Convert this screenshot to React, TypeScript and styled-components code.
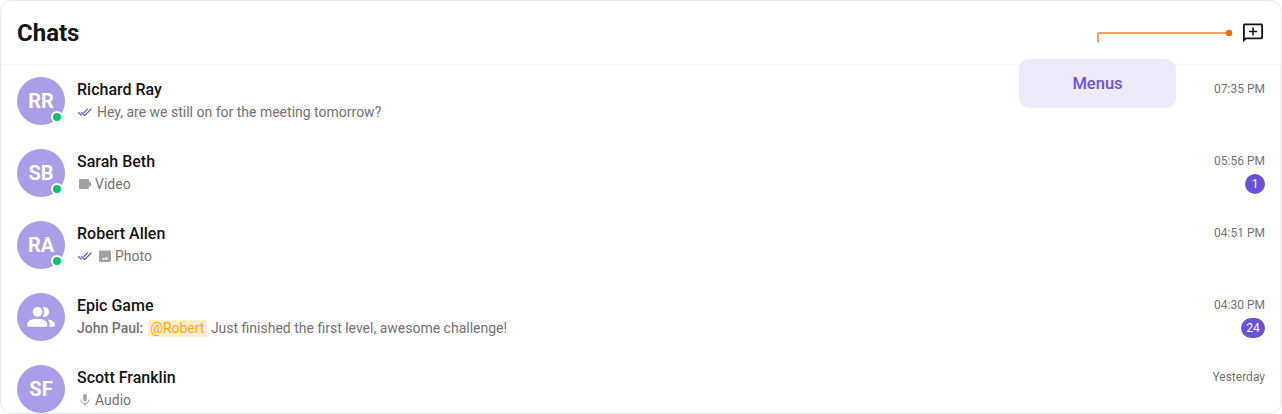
import React from "react";
import styled, { createGlobalStyle } from "styled-components";

const GlobalStyle = createGlobalStyle`
  *, *::before, *::after { box-sizing: border-box; }
  body {
    margin: 0;
    background: #fff;
    font-family: Roboto, "Liberation Sans", sans-serif;
    color: #141414;
  }
  svg { display: block; flex: none; }
`;

const Card = styled.main`
  position: relative;
  width: 1282px;
  height: 414px;
  border: 1px solid #e8e8e8;
  border-radius: 12px;
  overflow: hidden;
  background: #fff;
`;

const Header = styled.header`
  display: flex;
  align-items: center;
  justify-content: space-between;
  height: 64px;
  padding: 0 16px;
  border-bottom: 1px solid #f5f5f5;
`;

const Title = styled.h1`
  margin: 0;
  padding-top: 2px;
  font-size: 24px;
  font-weight: 700;
  line-height: 29px;
`;

const IconButton = styled.button`
  width: 24px;
  height: 24px;
  padding: 0;
  border: 0;
  background: none;
  color: #141414;
`;

const List = styled.ul`
  margin: 0;
  padding: 0;
  list-style: none;
  border-right: 1px solid #f5f5f5;
`;

const Row = styled.li`
  display: flex;
  gap: 12px;
  height: 72px;
  padding: 12px 15px 12px 16px;
`;

const Avatar = styled.div`
  position: relative;
  display: flex;
  align-items: center;
  justify-content: center;
  flex: none;
  width: 48px;
  height: 48px;
  border-radius: 50%;
  background: #aa9ee8;
  color: #fff;
  font-size: 20px;
  font-weight: 700;
  line-height: 24px;
`;

const OnlineDot = styled.span`
  position: absolute;
  right: 2px;
  bottom: 2px;
  width: 12px;
  height: 12px;
  border: 2px solid #fff;
  border-radius: 50%;
  background: #09c26f;
`;

const Details = styled.div`
  flex: 1;
  min-width: 0;
  padding-top: 3px;
`;

const Name = styled.div`
  margin-bottom: 3px;
  font-size: 16px;
  font-weight: 500;
  line-height: 19px;
`;

const Preview = styled.div`
  display: flex;
  align-items: center;
  height: 20px;
  color: #727272;
  font-size: 14px;
  line-height: 17px;
`;

const ReadMark = styled.span`
  margin-right: 4px;
  color: #6852d6;
`;

const AttachmentMark = styled.span`
  margin-right: 2px;
  color: #a1a1a1;
`;

const Sender = styled.span`
  margin-right: 5px;
  font-weight: 500;
`;

const Mention = styled.span`
  height: 17px;
  margin-right: 4px;
  padding: 0 2.5px 0 2px;
  border-radius: 2px;
  background: #ffedcc;
  color: #ffab00;
`;

const Meta = styled.div`
  display: flex;
  flex-direction: column;
  align-items: flex-end;
  padding-top: 5px;
`;

const Time = styled.time`
  height: 14px;
  margin-bottom: 6px;
  color: #727272;
  font-size: 12px;
  line-height: 14px;
`;

const Badge = styled.span`
  min-width: 20px;
  height: 20px;
  padding: 0 5.3px;
  border-radius: 10px;
  background: #6852d6;
  color: #fff;
  font-size: 12px;
  line-height: 20px;
  text-align: center;
`;

const Callout = styled.div`
  position: absolute;
  left: 1018px;
  top: 58px;
  width: 157px;
  height: 49px;
  border-radius: 10px;
  background: #edeafa;
  color: #6852d6;
  font-size: 16.5px;
  font-weight: 500;
  line-height: 50px;
  text-align: center;
`;

const Connector = styled.svg`
  position: absolute;
  left: 1094px;
  top: 26px;
`;

const NewChatIcon = () => (
  <svg width="24" height="24" viewBox="0 0 24 24" fill="currentColor">
    <path fillRule="evenodd" d="M3.6 2.5h16.8c.9 0 1.6.7 1.6 1.6v12.5c0 .9-.7 1.6-1.600 1.600H5.300L2 21.200V4.100c0-.9.7-1.600 1.600-1.600Zm.2 1.800v12.900l.800-.8h15.600V4.300Z" />
    <path d="M11.200 6.500h1.600v3.200H16v1.600h-3.200v3.200h-1.600v-3.200H8V9.700h3.200Z" />
  </svg>
);

const ReadIcon = () => (
  <svg width="16" height="16" viewBox="0 0 16 16" fill="none" stroke="currentColor" strokeWidth="1.3">
    <path d="M1.300 8.300 4.600 11.600M4.200 8.300l3.400 3.300 6.900-7M6.600 8.900l4.200-4.300" />
  </svg>
);

const VideoIcon = () => (
  <svg width="16" height="16" viewBox="0 0 16 16" fill="currentColor">
    <path d="M3.100 3h7.800c.6 0 1.100.5 1.100 1.100v2.700l2-2v6.400l-2-2v2.700c0 .6-.5 1.100-1.100 1.100H3.100c-.6 0-1.100-.5-1.100-1.100V4.100C2 3.500 2.500 3 3.100 3Z" />
  </svg>
);

const PhotoIcon = () => (
  <svg width="16" height="16" viewBox="0 0 16 16" fill="currentColor">
    <path fillRule="evenodd" d="M3.200 2.400h9.600c.7 0 1.200.5 1.200 1.200v9.200c0 .7-.5 1.200-1.200 1.200H3.200c-.7 0-1.200-.5-1.200-1.200V3.600c0-.7.5-1.200 1.200-1.200Zm1.500 9.200h6.600L9.400 8.600 7.600 10.800 6.400 9.400Z" />
  </svg>
);

const MicIcon = () => (
  <svg width="16" height="16" viewBox="0 0 16 16">
    <rect x="6.200" y="2" width="3.600" height="7.600" rx="1.800" fill="currentColor" />
    <path d="M4 7.500c0 2.500 1.700 4 4 4s4-1.500 4-4M8 11.500V14" fill="none" stroke="currentColor" strokeWidth="1" />
  </svg>
);

const GroupIcon = () => (
  <svg width="28" height="22" viewBox="0 0 28 22" fill="#fff">
    <circle cx="10.600" cy="5.900" r="4.900" />
    <path d="M.2 18.200C.2 14.500 5.200 12.700 10.300 12.700s10 1.800 10 5.500v1c0 1-.6 1.600-1.600 1.600H1.800C.8 20.800.2 20.200.2 19.200Z" />
    <path d="M15.600 10.500c2-2.700 2-6.500 0-9.200 3.600-1.100 6.400 1.500 6.400 4.600s-2.800 5.600-6.400 4.600ZM20.500 13.600c4.200.5 7.300 2 7.300 4.900v.8c0 .9-.6 1.500-1.500 1.500h-4.100c1.200-3 .6-5.300-1.700-7.200Z" />
  </svg>
);

type Attachment = "video" | "photo" | "audio";

interface Chat {
  name: string;
  initials?: string;
  online?: boolean;
  read?: boolean;
  attachment?: Attachment;
  sender?: string;
  mention?: string;
  message: string;
  time: string;
  unread?: number;
}

const attachmentIcons = { video: VideoIcon, photo: PhotoIcon, audio: MicIcon };

const chats: Chat[] = [
  { name: "Richard Ray", initials: "RR", online: true, read: true, message: "Hey, are we still on for the meeting tomorrow?", time: "07:35 PM" },
  { name: "Sarah Beth", initials: "SB", online: true, attachment: "video", message: "Video", time: "05:56 PM", unread: 1 },
  { name: "Robert Allen", initials: "RA", online: true, read: true, attachment: "photo", message: "Photo", time: "04:51 PM" },
  { name: "Epic Game", sender: "John Paul:", mention: "@Robert", message: "Just finished the first level, awesome challenge!", time: "04:30 PM", unread: 24 },
  { name: "Scott Franklin", initials: "SF", attachment: "audio", message: "Audio", time: "Yesterday" },
];

const ChatRow = ({ chat }: { chat: Chat }) => {
  const AttachmentIcon = chat.attachment && attachmentIcons[chat.attachment];
  return (
    <Row>
      <Avatar>
        {chat.initials ?? <GroupIcon />}
        {chat.online && <OnlineDot />}
      </Avatar>
      <Details>
        <Name>{chat.name}</Name>
        <Preview>
          {chat.read && <ReadMark><ReadIcon /></ReadMark>}
          {AttachmentIcon && <AttachmentMark><AttachmentIcon /></AttachmentMark>}
          {chat.sender && <Sender>{chat.sender}</Sender>}
          {chat.mention && <Mention>{chat.mention}</Mention>}
          <span>{chat.message}</span>
        </Preview>
      </Details>
      <Meta>
        <Time>{chat.time}</Time>
        {chat.unread && <Badge>{chat.unread}</Badge>}
      </Meta>
    </Row>
  );
};

export default function App() {
  return (
    <>
      <GlobalStyle />
      <Card>
        <Header>
          <Title>Chats</Title>
          <IconButton aria-label="New chat"><NewChatIcon /></IconButton>
        </Header>
        <List>
          {chats.map((chat) => <ChatRow key={chat.name} chat={chat} />)}
        </List>
        <Connector width="140" height="20" viewBox="0 0 140 20">
          <path d="M3 15.500V7q0-1 1-1H134" fill="none" stroke="#fba065" strokeWidth="2" />
          <circle cx="134" cy="6" r="3.200" fill="#f76808" />
        </Connector>
        <Callout>Menus</Callout>
      </Card>
    </>
  );
}
